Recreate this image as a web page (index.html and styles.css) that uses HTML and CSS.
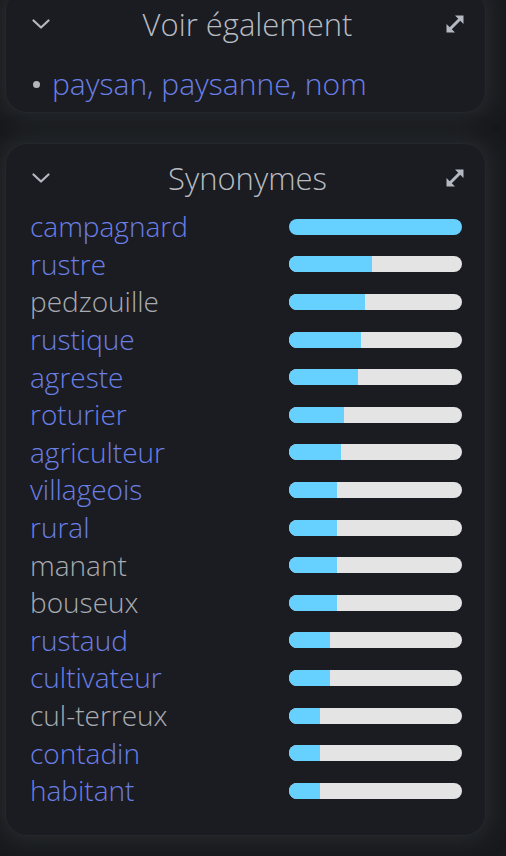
FILE: index.html
```html
<!DOCTYPE html>
<html lang="fr">
<head>
<meta charset="utf-8">
<link rel="stylesheet" href="styles.css">
</head>
<body>
<div class="page">
  <section class="card card-first">
    <div class="card-header">
      <svg class="chev" viewBox="0 0 18 10" width="18" height="10"><polyline points="1.5,1.5 9,8.5 16.5,1.5" fill="none" stroke="currentColor" stroke-width="2.2" stroke-linecap="round" stroke-linejoin="round"/></svg>
      <h2 class="card-title">Voir également</h2>
      <svg class="expand" viewBox="0 0 20 20" width="20" height="20"><line x1="5" y1="15" x2="15" y2="5" stroke="currentColor" stroke-width="3"/><polygon points="10,1.5 18.5,1.5 18.5,10" fill="currentColor"/><polygon points="1.5,10 1.5,18.5 10,18.5" fill="currentColor"/></svg>
    </div>
    <ul class="see-also">
      <li><span class="dot"></span><a class="link">paysan, paysanne, nom</a></li>
    </ul>
  </section>

  <section class="card card-syn">
    <div class="card-header">
      <svg class="chev" viewBox="0 0 18 10" width="18" height="10"><polyline points="1.5,1.5 9,8.5 16.5,1.5" fill="none" stroke="currentColor" stroke-width="2.2" stroke-linecap="round" stroke-linejoin="round"/></svg>
      <h2 class="card-title">Synonymes</h2>
      <svg class="expand" viewBox="0 0 20 20" width="20" height="20"><line x1="5" y1="15" x2="15" y2="5" stroke="currentColor" stroke-width="3"/><polygon points="10,1.5 18.5,1.5 18.5,10" fill="currentColor"/><polygon points="1.5,10 1.5,18.5 10,18.5" fill="currentColor"/></svg>
    </div>
    <div class="syn-list">
      <div class="syn-row"><span class="word link">campagnard</span><span class="bar"><span class="fill" style="width:100%"></span></span></div>
      <div class="syn-row"><span class="word link">rustre</span><span class="bar"><span class="fill" style="width:48%"></span></span></div>
      <div class="syn-row"><span class="word plain">pedzouille</span><span class="bar"><span class="fill" style="width:44%"></span></span></div>
      <div class="syn-row"><span class="word link">rustique</span><span class="bar"><span class="fill" style="width:41.6%"></span></span></div>
      <div class="syn-row"><span class="word link">agreste</span><span class="bar"><span class="fill" style="width:40%"></span></span></div>
      <div class="syn-row"><span class="word link">roturier</span><span class="bar"><span class="fill" style="width:31.8%"></span></span></div>
      <div class="syn-row"><span class="word link">agriculteur</span><span class="bar"><span class="fill" style="width:30%"></span></span></div>
      <div class="syn-row"><span class="word link">villageois</span><span class="bar"><span class="fill" style="width:27.7%"></span></span></div>
      <div class="syn-row"><span class="word link">rural</span><span class="bar"><span class="fill" style="width:27.7%"></span></span></div>
      <div class="syn-row"><span class="word plain">manant</span><span class="bar"><span class="fill" style="width:27.7%"></span></span></div>
      <div class="syn-row"><span class="word plain">bouseux</span><span class="bar"><span class="fill" style="width:27.7%"></span></span></div>
      <div class="syn-row"><span class="word link">rustaud</span><span class="bar"><span class="fill" style="width:23.7%"></span></span></div>
      <div class="syn-row"><span class="word link">cultivateur</span><span class="bar"><span class="fill" style="width:23.7%"></span></span></div>
      <div class="syn-row"><span class="word plain">cul-terreux</span><span class="bar"><span class="fill" style="width:17.9%"></span></span></div>
      <div class="syn-row"><span class="word link">contadin</span><span class="bar"><span class="fill" style="width:17.9%"></span></span></div>
      <div class="syn-row"><span class="word link">habitant</span><span class="bar"><span class="fill" style="width:17.9%"></span></span></div>
    </div>
  </section>
</div>
</body>
</html>
```
FILE: styles.css
```css
* { box-sizing: border-box; }
html, body {
  margin: 0;
  padding: 0;
  background: #17191c;
  height: 856px;
  overflow: hidden;
}
body {
  font-family: "Open Sans", "Liberation Sans", sans-serif;
  font-weight: 300;
  color: #b7bbc2;
}
.page {
  display: flex;
  flex-direction: column;
  gap: 30px;
  padding: 0 20px 0 5px;
}
.card {
  background: #1a1c21;
  border: 1px solid #24272c;
  border-radius: 22px;
  box-shadow: 0 0 22px 6px rgba(58, 61, 67, 0.45);
}
.card-first {
  margin-top: -11px;
  height: 124px;
}
.card-syn {
  height: 693px;
}
.card-header {
  display: flex;
  align-items: center;
  justify-content: space-between;
  height: 40px;
  margin-top: 14px;
  padding: 0 20px 0 26px;
}
.chev {
  color: #b4b8c0;
  display: block;
}
.expand {
  color: #b4b8c0;
  display: block;
}
.card-title {
  margin: 0;
  font-size: 31px;
  font-weight: 300;
  line-height: 40px;
  color: #b7bbc2;
}
.see-also {
  list-style: none;
  margin: 0;
  padding: 19px 0 0 27px;
}
.see-also li {
  display: flex;
  align-items: center;
  gap: 12px;
  height: 40px;
  font-size: 30px;
}
.dot {
  width: 7px;
  height: 7px;
  border-radius: 50%;
  background: #b3b6bc;
  flex: none;
  margin-top: 2px;
}
.link { color: #6a7fe6; }
.plain { color: #a8abb1; }
.syn-list {
  padding: 10px 23px 0 24px;
}
.syn-row {
  display: grid;
  grid-template-columns: 1fr 173px;
  align-items: center;
  height: 37.6px;
}
.word {
  font-size: 28px;
  line-height: 37px;
  white-space: nowrap;
}
.bar {
  display: block;
  height: 16px;
  border-radius: 8px;
  background: #e4e4e4;
  overflow: hidden;
}
.fill {
  display: block;
  height: 100%;
  background: #66d0ff;
}
```
